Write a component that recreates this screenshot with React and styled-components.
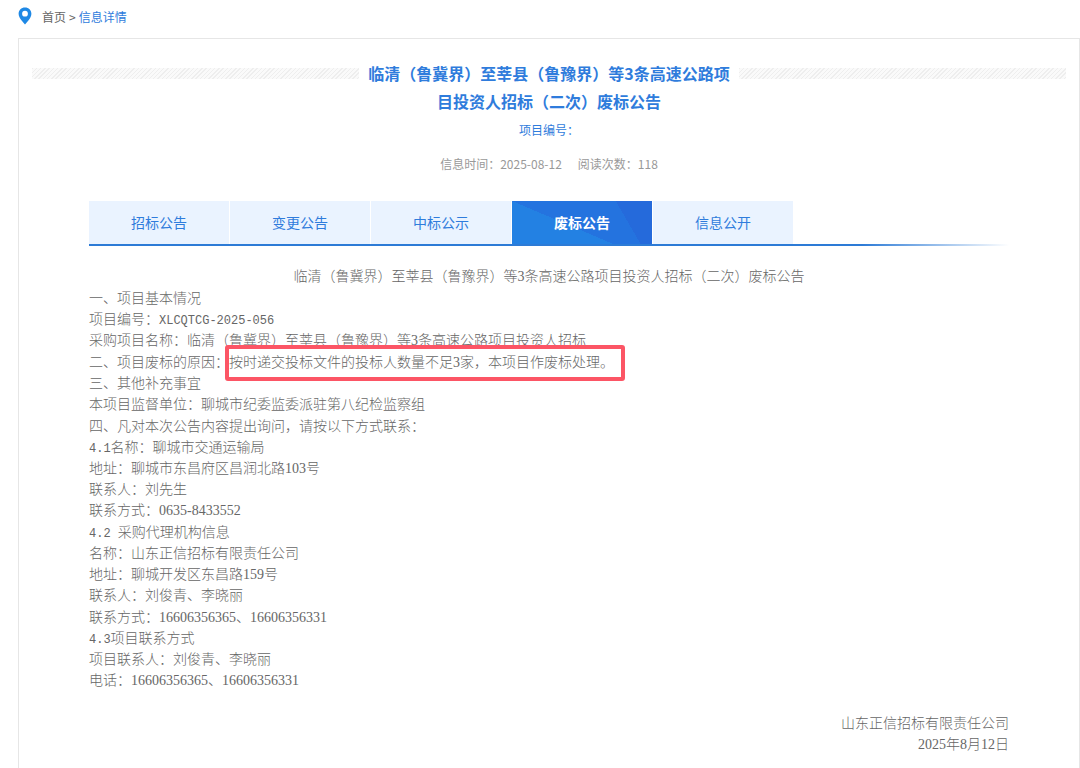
import React, { useState } from 'react';
import styled, { createGlobalStyle } from 'styled-components';

const tabs = ['招标公告', '变更公告', '中标公示', '废标公告', '信息公开'];

const App = () => {
  const [active, setActive] = useState('废标公告');

  return (
    <Page>
      <GlobalStyle />
      <Breadcrumb>
        <Pin viewBox="0 0 14 18" aria-hidden="true">
          <path
            fillRule="evenodd"
            d="M7 0.5C3.3 0.5 0.6 3.2 0.6 6.8C0.6 9.3 2 11.4 3.6 13.6L7 17.5L10.4 13.6C12 11.4 13.4 9.3 13.4 6.8C13.4 3.2 10.7 0.5 7 0.5ZM7 3.8A2.9 2.9 0 1 1 7 9.6A2.9 2.9 0 1 1 7 3.8Z"
          />
        </Pin>
        <Crumb href="#">首页</Crumb>
        <span>&gt;</span>
        <Crumb href="#" $current>信息详情</Crumb>
      </Breadcrumb>

      <Panel>
        <Header>
          <Stripes />
          <Title>临清（鲁冀界）至莘县（鲁豫界）等3条高速公路项目投资人招标（二次）废标公告</Title>
          <Stripes />
        </Header>
        <ProjectNo>项目编号：</ProjectNo>
        <Meta>
          <span>信息时间：2025-08-12</span>
          <span>阅读次数：118</span>
        </Meta>

        <Content>
          <Tabs>
            {tabs.map((tab) => (
              <Tab key={tab} type="button" $active={tab === active} onClick={() => setActive(tab)}>
                {tab}
              </Tab>
            ))}
          </Tabs>
          <Underline />

          <Article>
            <Heading>临清（鲁冀界）至莘县（鲁豫界）等3条高速公路项目投资人招标（二次）废标公告</Heading>
            <Section>
              <Line>一、项目基本情况</Line>
              <Line>项目编号：<Code>XLCQTCG-2025-056</Code></Line>
              <Line>采购项目名称：临清（鲁冀界）至莘县（鲁豫界）等3条高速公路项目投资人招标</Line>
            </Section>
            <Section>
              <Line>
                二、项目废标的原因：<Marked>按时递交投标文件的投标人数量不足3家，本项目作废标处理。</Marked>
              </Line>
              <Line>三、其他补充事宜</Line>
              <Line>本项目监督单位：聊城市纪委监委派驻第八纪检监察组</Line>
            </Section>
            <Section>
              <Line>四、凡对本次公告内容提出询问，请按以下方式联系：</Line>
              <Line><Code>4.1</Code>名称：聊城市交通运输局</Line>
              <Line>地址：聊城市东昌府区昌润北路103号</Line>
              <Line>联系人：刘先生</Line>
              <Line>联系方式：0635-8433552</Line>
            </Section>
            <Section>
              <Line><Code>4.2 </Code>采购代理机构信息</Line>
              <Line>名称：山东正信招标有限责任公司</Line>
              <Line>地址：聊城开发区东昌路159号</Line>
              <Line>联系人：刘俊青、李晓丽</Line>
            </Section>
            <Section>
              <Line>联系方式：16606356365、16606356331</Line>
              <Line><Code>4.3</Code>项目联系方式</Line>
              <Line>项目联系人：刘俊青、李晓丽</Line>
              <Line>电话：16606356365、16606356331</Line>
            </Section>
            <Signature>
              <Line>山东正信招标有限责任公司</Line>
              <Line>2025年8月12日</Line>
            </Signature>
          </Article>
        </Content>
      </Panel>
    </Page>
  );
};

const GlobalStyle = createGlobalStyle`
  * {
    box-sizing: border-box;
  }
  body {
    margin: 0;
    background: #fff;
    color: #666;
    font-family: "Noto Sans CJK SC", sans-serif;
    font-size: 12px;
  }
`;

const Page = styled.div`
  display: flex;
  flex-direction: column;
  min-height: 100vh;
  padding-left: 18px;
`;

const Breadcrumb = styled.nav`
  display: flex;
  align-items: center;
  gap: 3px;
  height: 38px;
  padding-bottom: 6px;
`;

const Pin = styled.svg`
  width: 14px;
  height: 18px;
  margin-right: 7px;
  fill: #1e88e5;
`;

const Crumb = styled.a`
  color: ${(props) => (props.$current ? '#2f7cdc' : '#666')};
  text-decoration: none;
`;

const Panel = styled.main`
  flex: 1;
  border: 1px solid #e6e6e6;
  border-bottom: 0;
  padding: 20px 0 12px;
`;

const Header = styled.header`
  display: flex;
  padding: 0 13px;
`;

const Stripes = styled.div`
  flex: 1;
  height: 11px;
  margin-top: 9px;
  background: repeating-linear-gradient(135deg, #eee 0 1px, #fafafa 1px 3px);
`;

const Title = styled.h1`
  width: 380px;
  margin: 0;
  padding: 0 8px;
  color: #2f7cdc;
  font-size: 16px;
  font-weight: bold;
  line-height: 28px;
  text-align: center;
`;

const ProjectNo = styled.div`
  margin-top: 4px;
  color: #2f7cdc;
  line-height: 22px;
  text-align: center;
`;

const Meta = styled.div`
  display: flex;
  justify-content: center;
  gap: 16px;
  margin-top: 12px;
  color: #999;
  line-height: 22px;
`;

const Content = styled.div`
  padding: 0 70px;
`;

const Tabs = styled.div`
  display: flex;
  gap: 1px;
  margin-top: 26px;
`;

const Tab = styled.button`
  width: 140px;
  height: 43px;
  padding: 0 0 2px;
  border: 0;
  background: ${(props) => (props.$active
    ? `linear-gradient(60deg, transparent 78%, #256adb 78%),
       linear-gradient(203deg, #2473df 58%, #2381e3 58%)`
    : '#eaf3ff')};
  color: ${(props) => (props.$active ? '#fff' : '#2f7cdc')};
  font-family: inherit;
  font-size: 14px;
  font-weight: ${(props) => (props.$active ? 'bold' : 'normal')};
  cursor: pointer;
`;

const Underline = styled.div`
  height: 2px;
  background: linear-gradient(90deg, #2d7bd6 84%, #fff);
`;

const Article = styled.article`
  display: flex;
  flex-direction: column;
  gap: 1px;
  padding-top: 20px;
  font-family: "Liberation Serif", "Noto Sans CJK SC", serif;
  font-size: 14px;
  font-weight: 300;
`;

const Line = styled.p`
  margin: 0;
  line-height: 21px;
`;

const Heading = styled.h2`
  margin: 0;
  font-size: 14px;
  font-weight: 300;
  line-height: 21px;
  text-align: center;
`;

const Section = styled.section``;

const Code = styled.span`
  font-family: "Liberation Mono", monospace;
  font-size: 12px;
  line-height: 1;
  white-space: pre;
`;

const Marked = styled.span`
  position: relative;

  &::after {
    content: '';
    position: absolute;
    inset: -10px -11px -11px -4px;
    border: 4px solid #fc5565;
    border-radius: 3px;
  }
`;

const Signature = styled.footer`
  margin-top: 21px;
  text-align: right;
`;

export default App;
